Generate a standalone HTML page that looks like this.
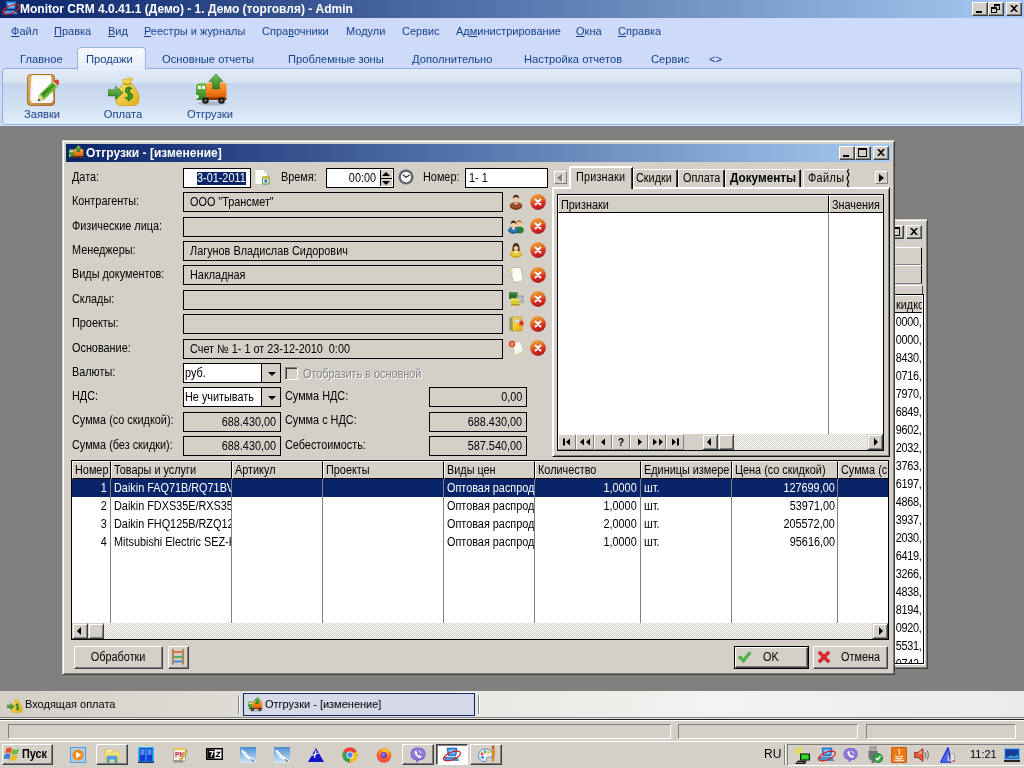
<!DOCTYPE html>
<html lang="ru">
<head>
<meta charset="utf-8">
<title>Monitor CRM</title>
<style>
*{box-sizing:border-box;margin:0;padding:0}
html,body{width:1024px;height:768px;overflow:hidden;background:#808080}
body{font-family:"Liberation Sans",sans-serif;font-size:11px;color:#000;position:relative}
.abs{position:absolute}
.t{position:absolute;white-space:nowrap;line-height:14px;height:14px}
/* main title */
#mtitle{left:0;top:0;width:1024px;height:18px;background:linear-gradient(90deg,#0a246a,#a6caf0)}
#mtitle .cap{left:20px;top:1px;color:#fff;font-weight:bold;font-size:12px;line-height:16px;height:16px}
.wb{position:absolute;width:16px;height:14px;background:#d4d0c8;border:1px solid;border-color:#fff #404040 #404040 #fff;box-shadow:inset -1px -1px 0 #808080}
/* menu */
#menubar{left:0;top:18px;width:1024px;height:28px;background:#cddafa}
#menubar .t{top:6px;font-size:11px;color:#15428b;line-height:14px}
#menubar u{text-decoration:underline}
/* ribbon */
#tabrow{left:0;top:46px;width:1024px;height:22px;background:#cddafa;z-index:2}
#tabrow .t{z-index:3;top:6px;font-size:11.2px;color:#15428b}
#acttab{left:77px;top:1px;width:69px;height:23px;z-index:2;border:1px solid #9ab3dc;border-bottom:none;border-radius:4px 4px 0 0;background:linear-gradient(#f6f9fe,#e6eefa)}
#ribbon{left:0;top:68px;width:1024px;height:58px;background:#cddafa}
#rpanel{left:2px;top:0;width:1020px;height:57px;border:1px solid #94afd8;border-radius:4px;background:linear-gradient(#e2eaf5 0,#d8e3f1 14px,#c5d5ec 14px,#cddbf0 30px,#e2eefb 55px);box-shadow:0 1px 0 #cfeafc}
#ribbon .t{font-size:11.2px;color:#15428b;text-align:center;width:80px}
/* bottom */
#mditabs{left:0;top:691px;width:1024px;height:26px;background:linear-gradient(90deg,#d4d0c8 0%,#e4e2dc 35%,#f3f3f1 70%,#ebebe9 100%)}
#mditabs .t{font-size:11px;top:6px}
#mdiact{left:243px;top:2px;width:232px;height:23px;border:1px solid #0a246a;background:#d6d9e8;box-shadow:0 -1px 0 #fff}
#status{left:0;top:717px;width:1024px;height:24px;background:linear-gradient(#808080 0 1px,#e8e6e0 1px 2px,#202020 2px 3px,#fff 3px 4px,#d4d0c8 4px)}
.sunk{position:absolute;border:1px solid;border-color:#808080 #fff #fff #808080}
#taskbar{left:0;top:741px;width:1024px;height:27px;background:#d4d0c8;border-top:1px solid #fff}

/* dialog */
.frame{position:absolute;background:#d4d0c8;border:1px solid;border-color:#d4d0c8 #404040 #404040 #d4d0c8;box-shadow:inset 1px 1px 0 #fff,inset -1px -1px 0 #808080}
.cap2{position:absolute;height:18px;background:linear-gradient(90deg,#0a246a,#a6caf0)}
.cap2 .t{color:#fff;font-weight:bold;font-size:12px;line-height:16px;height:16px;top:1px}
.lbl{position:absolute;white-space:nowrap;font-size:11px;line-height:14px;height:14px}
.ro{position:absolute;height:20px;border:1px solid #000;background:#d4d0c8;font-size:11px;line-height:16px;padding:1px 0 0 6px;white-space:nowrap;overflow:hidden}
.ro.r{text-align:right;padding:1px 4px 0 0}
.ed{position:absolute;height:20px;border:1px solid #000;background:#fff;font-size:11px;line-height:16px;padding:1px 3px;white-space:nowrap;overflow:hidden}
.btn{position:absolute;background:#d4d0c8;border:1px solid;border-color:#fff #404040 #404040 #fff;box-shadow:inset -1px -1px 0 #808080;font-size:11px;text-align:center;white-space:nowrap}
.sb{position:absolute;background:#d4d0c8;border:1px solid;border-color:#d4d0c8 #404040 #404040 #d4d0c8;box-shadow:inset 1px 1px 0 #fff,inset -1px -1px 0 #808080}
.track{position:absolute;background-image:conic-gradient(#fff 25%,#d4d0c8 0 50%,#fff 0 75%,#d4d0c8 0);background-size:2px 2px}
.ic{position:absolute;width:16px;height:16px}

.combo{position:absolute;height:20px;border:1px solid #000;background:#fff;font-size:11px;line-height:16px;padding:1px 0 0 1px;white-space:nowrap;overflow:hidden}
.combo b{position:absolute;right:0;top:0;width:19px;height:18px;background:#d4d0c8;border-left:1px solid #000}
.combo b:after{content:"";position:absolute;left:6px;top:8px;border:4px solid transparent;border-top:4px solid #000;border-bottom:none}
.tab{position:absolute;background:#d4d0c8;border:1px solid;border-color:#fff #000 transparent #fff;border-radius:2px 2px 0 0;box-shadow:inset -1px 0 0 #404040;font-size:11px;line-height:14px;white-space:nowrap;overflow:hidden}
.gh{position:absolute;background:#d4d0c8;border:1px solid;border-color:#fff #000 #000 #fff;font-size:11px;line-height:14px;padding:2px 0 0 2px;white-space:nowrap;overflow:hidden;height:18px}

.nb{position:absolute;top:434px;width:18px;height:16px;background:#d4d0c8;border:1px solid;border-color:#fff #808080 #808080 #fff}
.nb svg{position:absolute;left:0;top:0}
.cell{position:absolute;font-size:11px;line-height:14px;height:18px;padding-top:2px;white-space:nowrap;overflow:hidden}
.vl{position:absolute;width:1px;background:#808080}

.sx,.sxr,.sxc{display:inline-block;font-size:12px;transform:scaleX(.905);white-space:nowrap}
.sx{transform-origin:0 50%}.sxr{transform-origin:100% 50%}.sxc{transform-origin:50% 50%}
</style>
</head>
<body>
<div id="root" style="position:absolute;left:0;top:0;width:1024px;height:768px;will-change:transform">
<svg width="0" height="0" style="position:absolute">
<defs>
<linearGradient id="gRed" x1=".35" y1="0" x2=".65" y2="1"><stop offset="0" stop-color="#eda436"/><stop offset=".35" stop-color="#e2702a"/><stop offset=".65" stop-color="#d22c26"/><stop offset="1" stop-color="#a8161c"/></linearGradient>
<linearGradient id="gGreenA" x1="0" y1="0" x2="0" y2="1"><stop offset="0" stop-color="#7cc45a"/><stop offset="1" stop-color="#2e7d20"/></linearGradient>
<linearGradient id="gOrange" x1="0" y1="0" x2="0" y2="1"><stop offset="0" stop-color="#fba446"/><stop offset=".6" stop-color="#f57b14"/><stop offset="1" stop-color="#d85a08"/></linearGradient>
<linearGradient id="gYel" x1="0" y1="0" x2="1" y2="1"><stop offset="0" stop-color="#fde66a"/><stop offset="1" stop-color="#e2ae16"/></linearGradient>
<linearGradient id="gClip" x1="0" y1="0" x2="1" y2="1"><stop offset="0" stop-color="#e3b569"/><stop offset="1" stop-color="#b97f33"/></linearGradient>
<symbol id="iX" viewBox="0 0 16 16"><circle cx="8" cy="8" r="7.900" fill="url(#gRed)"/><path d="M5.500 5.500l5 5M10.500 5.500l-5 5" stroke="#fff" stroke-width="1.800" stroke-linecap="round"/></symbol>
<symbol id="iMan" viewBox="0 0 16 16"><ellipse cx="8" cy="12" rx="6.200" ry="3.900" fill="#7e3c18"/><ellipse cx="8" cy="11.300" rx="5" ry="2.600" fill="#96522a"/><path d="M5.800 8.800l2.200 3 2.200-3z" fill="#fff"/><path d="M7.500 9.500h1l.4 2.800-.9 1-.9-1z" fill="#d02020"/><ellipse cx="8" cy="5.300" rx="2.900" ry="3.300" fill="#f3c9a0"/><path d="M4.900 5c-.3-3 1.300-4.300 3.100-4.300S11.400 2 11.100 5c-.6-1.300-1.600-2-3.100-2s-2.500.7-3.100 2z" fill="#4a2a18"/></symbol>
<symbol id="iMen" viewBox="0 0 16 16"><ellipse cx="11.300" cy="12" rx="4.500" ry="3.600" fill="#2f7f32"/><ellipse cx="11.300" cy="5.800" rx="2.400" ry="2.800" fill="#f3c9a0"/><path d="M8.800 5.500c-.2-2.500 1-3.600 2.500-3.600s2.700 1.100 2.500 3.600c-.5-1-1.300-1.600-2.500-1.600s-2 .6-2.500 1.600z" fill="#a8823a"/><ellipse cx="5.500" cy="12.300" rx="5.300" ry="3.600" fill="#1f5f98"/><ellipse cx="5.500" cy="11.700" rx="4.200" ry="2.400" fill="#2f77b4"/><path d="M3.600 9.600l1.900 2.600 1.900-2.600z" fill="#fff"/><ellipse cx="5.500" cy="6.800" rx="2.600" ry="3" fill="#f3c9a0"/><path d="M2.800 6.500c-.3-2.800 1.100-3.900 2.700-3.900s3 1.100 2.700 3.900c-.5-1.100-1.400-1.800-2.700-1.800s-2.200.7-2.700 1.800z" fill="#3a2418"/></symbol>
<symbol id="iWoman" viewBox="0 0 16 16"><path d="M4.600 9.500C3.800 4 5.500 1 8 1s4.200 3 3.400 8.500z" fill="#4a2a1c"/><ellipse cx="8" cy="12.200" rx="6" ry="3.700" fill="#c8a820"/><ellipse cx="8" cy="11.600" rx="4.800" ry="2.500" fill="#e8cc40"/><path d="M6.200 9.200l1.800 2.500 1.800-2.500z" fill="#fff"/><ellipse cx="8" cy="5.800" rx="2.300" ry="2.900" fill="#f3c9a0"/><path d="M5.600 5.200c.1-2 1.100-2.900 2.400-2.900s2.300.9 2.400 2.900c-1-.3-1.800-.8-2.400-1.600-.6.800-1.400 1.300-2.400 1.600z" fill="#4a2a1c"/></symbol>
<symbol id="iPaper" viewBox="0 0 16 16"><path d="M4 1c3-.8 6.500-.6 9 .2.600 3.800 2.300 8 2 12.300-2.500 1.500-7 2-10 1.300C4.700 11 3.500 7 1.500 4 2 2.500 3 1.500 4 1z" fill="#fdfdf8" stroke="#a8a898" stroke-width=".8"/><path d="M1.500 4c.8 1.300 1.800 2 3 2.300L4 1C3 1.500 2 2.500 1.500 4z" fill="#ece9a8" stroke="#c8c490" stroke-width=".4"/><path d="M11.500 13.500c1 .2 2.300.5 3.500 0-1 1.200-2.500 1.800-4 1.800z" fill="#d8dca0"/></symbol>
<symbol id="iStore" viewBox="0 0 16 16"><rect x="1" y="1.500" width="8.500" height="6.500" fill="#2f6a30"/><rect x="1" y="1.500" width="8.500" height="2" fill="#3f8a42"/><rect x="8.500" y="4.500" width="7" height="7" fill="#8a949c"/><rect x="9.500" y="5.500" width="5" height="5" fill="#b8c0c8"/><rect x="3" y="7.500" width="8.500" height="7" fill="#d8cc34"/><rect x="3" y="7.500" width="8.500" height="2" fill="#ece46a"/><rect x="3" y="13" width="8.500" height="1.500" fill="#a89c20"/></symbol>
<symbol id="iBook" viewBox="0 0 16 16"><path d="M1.500 2.500l1.500-1v13l-1.500-1z" fill="#8a8f98"/><rect x="3" y="1" width="11" height="14" rx="1" fill="url(#gYel)" stroke="#a88a10" stroke-width=".6"/><rect x="3" y="1" width="1.800" height="14" fill="#9aa23a"/><rect x="6.500" y="3.500" width="5" height="3" fill="#d8dce6" stroke="#a8a8b0" stroke-width=".5"/><path d="M11.500 10V6.500l2-2.500 2 2.500V10l-2-1.500z" fill="#e02818"/></symbol>
<symbol id="iSeal" viewBox="0 0 16 16"><path d="M4.500 2.500l8-1 3 9.500-8.500 4.500z" fill="#fafaf2" stroke="#c4c4b0" stroke-width=".7"/><path d="M7 15.500l8.500-4.500-.4 1.200-7.600 4z" fill="#d4dc8c"/><circle cx="4" cy="4" r="3.200" fill="#e04434"/><circle cx="4" cy="4" r="1.500" fill="#f7b8a0"/></symbol>
<symbol id="iDoc" viewBox="0 0 16 16"><path d="M1 .5h8.500L13 4v11.500H1z" fill="#fdfdfd" stroke="#c8c8c8" stroke-width=".8"/><path d="M9.500.5V4H13z" fill="#dcdcdc"/><rect x="8" y="7.500" width="7.500" height="8" rx="1" fill="#4e9a3a"/><rect x="9" y="9.500" width="5.500" height="5" fill="#f4f8e8"/><rect x="10.500" y="10.500" width="2.500" height="3" fill="#2a62b8"/><rect x="8" y="7.500" width="7.500" height="2" rx="1" fill="#d8b830"/></symbol>
<symbol id="iClock" viewBox="0 0 16 16"><circle cx="8" cy="8" r="7.700" fill="#8a8e94"/><circle cx="8" cy="8" r="7" fill="#585c62"/><circle cx="8" cy="8" r="5.200" fill="#fdfdfd"/><path d="M8 8.300L5.300 6M8 8.300l3.400-2" stroke="#222" stroke-width="1.100" fill="none" stroke-linecap="round"/></symbol>
<symbol id="iTruck" viewBox="0 0 32 32"><ellipse cx="17" cy="29.500" rx="14" ry="2" fill="#000" opacity=".18"/><path d="M1 12.500c0-2 1.500-3.500 4-3.500h6v17H3c-1.200 0-2-.8-2-2z" fill="url(#gGreenA)"/><rect x="3" y="12" width="3" height="3" rx=".6" fill="#fff"/><rect x="7" y="12" width="3" height="3" rx=".6" fill="#fff"/><rect x="1" y="21" width="2.500" height="3.500" rx="1" fill="#fff"/><rect x="11" y="8.500" width="20.500" height="15.500" rx="2.500" fill="url(#gOrange)"/><rect x="11" y="23.500" width="20.500" height="2.500" fill="#7a3a08"/><circle cx="10.500" cy="26.500" r="3.300" fill="#1a1a1a"/><circle cx="10.500" cy="26.500" r="1.300" fill="#777"/><circle cx="26.500" cy="26.500" r="3.300" fill="#1a1a1a"/><circle cx="26.500" cy="26.500" r="1.300" fill="#777"/><path d="M21 0l7 7.500h-3.700V15h-6.600V7.500H14z" fill="url(#gGreenA)" stroke="#2a6a1c" stroke-width=".6"/></symbol>
<symbol id="iBag" viewBox="0 0 32 32"><g transform="translate(0,1.500) scale(1,1.050)"><path d="M14 4.500c2-1.500 4-.5 5.500-1.500s3.500-.5 5 .5c-1 1.500-1.500 2.800-1.800 4.300 4 2.500 8.300 8.200 8.300 14.200 0 4-2 6.500-4 6.500H12c-2.500 0-4-2-4-5.500 0-6 3.500-12 7.800-15.200-.3-1.300-.9-2.300-1.800-3.300z" fill="url(#gYel)" stroke="#c89a10" stroke-width=".7"/><path d="M15.500 7.800c2.300.9 5 .9 7.300 0" stroke="#b8860c" stroke-width="1.200" fill="none"/><path d="M23.500 13c-1-1.300-5.500-1.800-5.500 1.300 0 3 6 2 6 5.200 0 3.200-5 3-6.500 1.200M20.800 10.500v14" stroke="#2f8a28" stroke-width="2.300" fill="none"/><path d="M0 13.500h7.500V10l7.500 6.500-7.500 6.500v-3.500H0z" fill="url(#gGreenA)" stroke="#2a6a1c" stroke-width=".5"/></g></symbol>
<symbol id="iClip" viewBox="0 0 32 32"><rect x=".5" y=".5" width="27" height="31" rx="3" fill="url(#gClip)" stroke="#a8732c"/><path d="M4.500 1.500h19.500l2.500 24-2 3.500H4.500l-1.500-4z" fill="#f4f4f6"/><path d="M5 1.500h18.500l1.500 22.500-19 2z" fill="#fcfcfd"/><path d="M10.500 27.500l2-7L26.200 7l5 5L17.500 25.500z" fill="#6abf3a"/><path d="M14.500 19L27.800 8.800l1.400 1.400L16 23.500z" fill="#3f8f22"/><path d="M26.500 7.500l1.500-1.500c1-1 3-.5 4 .8s.8 2.800-.2 3.500L30.500 11.500z" fill="#d8482a"/><path d="M25.500 8.500l1-1 4 4-1 1z" fill="#d8d8d0"/><path d="M11 27l1.800-6.200 4.200 4.200z" fill="#f2d49a"/><path d="M11 27l.7-2.400 1.700 1.700z" fill="#222"/></symbol>
<symbol id="iOk" viewBox="0 0 16 16"><path d="M1 8.500l2.500-2 3 3.500L13.500 2l2 1.800L6.800 14.500z" fill="#4fb73c" stroke="#2d8a22" stroke-width=".6"/></symbol>
<symbol id="iCancel" viewBox="0 0 16 16"><path d="M1 3.500L3.500 1 8 5.500 12.500 1 15 3.500 10.500 8l4.500 4.500-2.500 2.500L8 10.500 3.500 15 1 12.500 5.500 8z" fill="#e0242a" stroke="#b01018" stroke-width=".5"/></symbol>

<symbol id="tFlag" viewBox="0 0 16 14"><path d="M2.300 1.500c2-1.500 4-1.400 5.800 0L6.800 6.500C5 5.200 3.200 5.200 1 6.500z" fill="#e8502a"/><path d="M8.800 2c1.900 1.100 4 1 6.200-.5L13.700 6.500c-2.200 1.500-4.300 1.500-6.200.5z" fill="#6cb83a"/><path d="M.8 7.500c2.200-1.300 4-1.300 5.800 0L5.300 12.500c-1.800-1.300-3.600-1.300-5.800 0z" fill="#3a7fd8"/><path d="M7.300 8c1.900 1.100 4 1 6.200-.5l-1.300 5c-2.200 1.500-4.300 1.500-6.200.5z" fill="#f2b818"/></symbol>
<symbol id="tWmp" viewBox="0 0 16 16"><rect x=".5" y=".5" width="15" height="15" fill="#a8d0f0" stroke="#5a98d8"/><circle cx="8" cy="8" r="5.600" fill="#f08a18"/><path d="M6.200 4.800v6.400L11.300 8z" fill="#fff"/></symbol>
<symbol id="tFolder" viewBox="0 0 16 14"><path d="M.5 2c0-.8.500-1.500 1.500-1.500h4l1.500 1.500H15c.6 0 1 .4 1 1v10H.5z" fill="#f2dc7e" stroke="#d8b848" stroke-width=".6"/><rect x="3" y=".8" width="5" height="1.500" fill="#fdf6c8"/><path d="M2.500 14V8.500c0-1 .8-1.800 1.800-1.800h7.400c1 0 1.800.8 1.800 1.800V14h-3v-3.500h-5V14z" fill="#4aa0dc"/></symbol>
<symbol id="tBook" viewBox="0 0 16 16"><rect x="0" y="0" width="16" height="15" fill="#28c8e8"/><rect x="0" y="14.500" width="16" height="1.500" fill="#0c2a78"/><rect x="1.500" y="1" width="6" height="13" fill="#1838d8"/><rect x="8.500" y="1" width="6" height="13" fill="#1838d8"/><path d="M2.500 3h4M2.500 5h4M2.500 7h4M9.500 3h4M9.500 5h4M9.500 7h4" stroke="#9ad8f8" stroke-width="1"/></symbol>
<symbol id="tPn" viewBox="0 0 16 16"><path d="M1.500 1.500h12v11l-2 2.500h-10z" fill="#f4f0e4" stroke="#888" stroke-width=".7"/><rect x="1.500" y="1" width="12" height="2" fill="#e8c848"/><path d="M1.500 13h10l-.5 2.500H1.500z" fill="#9a9a9a"/><text x="3" y="9.500" font-family="Liberation Sans" font-size="6.500" font-weight="bold" fill="#c01838">PN</text><path d="M8 12l6.500-9 1.500 1-6.500 9-2 .8z" fill="#f0c030" stroke="#8a6a10" stroke-width=".4"/></symbol>
<symbol id="t7z" viewBox="0 0 17 12"><rect x="0" y="0" width="17" height="12" fill="#000"/><rect x="1.500" y="1.500" width="14" height="9" fill="#fff"/><rect x="1.500" y="1.500" width="7" height="9" fill="#000"/><path d="M3.200 3.600h3.800L5 8.800" stroke="#fff" stroke-width="1.300" fill="none"/><path d="M10.300 4.200h3.600l-3.600 4.300h3.900" stroke="#000" stroke-width="1.100" fill="none"/></symbol>
<symbol id="tBird" viewBox="0 0 16 16"><linearGradient id="gSky" x1="0" y1="0" x2="0" y2="1"><stop offset="0" stop-color="#4a8fd0"/><stop offset="1" stop-color="#d4e8f8"/></linearGradient><rect width="16" height="16" fill="url(#gSky)"/><path d="M1 2.500c2 .5 3.500 1.500 5 3.500l2 2.500 5.500 4 2 3-3.500-2-5-2.500L3.500 8 2 5z" fill="#fff"/><path d="M10 12l4.500 3.500L13 13z" fill="#222"/><path d="M3 6l3 2.500" stroke="#8aa" stroke-width=".6"/></symbol>
<symbol id="tTri" viewBox="0 0 16 14"><path d="M8 0l8 14H0z" fill="#1414c8"/><path d="M3.500 7.500l7-2.500M7.800 2.500L6.500 10" stroke="#fff" stroke-width="1.200"/></symbol>
<symbol id="tChrome" viewBox="0 0 16 16"><circle cx="8" cy="8" r="7.500" fill="#e84436"/><path d="M8 8L1.500 4.250A7.500 7.500 0 0 0 8 15.500z" fill="#34a454"/><path d="M8 8v7.500A7.500 7.500 0 0 0 14.500 4.250z" fill="#fbc116"/><path d="M8 8L1.500 4.250A7.500 7.500 0 0 1 14.500 4.250z" fill="#e84436"/><path d="M8 8l-3.200 5.600L1.500 4.250z" fill="#34a454"/><circle cx="8" cy="8" r="3.500" fill="#fff"/><circle cx="8" cy="8" r="2.700" fill="#4a8af4"/></symbol>
<symbol id="tFox" viewBox="0 0 16 16"><radialGradient id="gFox" cx="55%" cy="25%" r="80%"><stop offset="0" stop-color="#ffd83a"/><stop offset=".5" stop-color="#ff7a1e"/><stop offset="1" stop-color="#e8284a"/></radialGradient><circle cx="8" cy="8.500" r="7.300" fill="url(#gFox)"/><path d="M10 .5c2 1.500 4 3 4.800 5.500-1-1-2-1.500-3-1.500z" fill="#ffc02a"/><circle cx="7.800" cy="8.300" r="3.300" fill="#7a3ab8"/><circle cx="7.300" cy="7.800" r="1.800" fill="#a468e0"/></symbol>
<symbol id="tViber" viewBox="0 0 16 16"><path d="M8 .5c5 0 7.500 2 7.500 6.500s-2.500 6.300-6.500 6.500L6 16v-2.800C2.500 12.500.5 10.800.5 7S3 .5 8 .5z" fill="#7d6bcc"/><path d="M8 1.800c4 0 6.200 1.600 6.200 5.200S12 12.200 8 12.200 1.800 10.600 1.800 7 4 1.800 8 1.800z" fill="#8e7cd8"/><path d="M5.200 4c.5-.5 1-.3 1.300.2l.7 1.200c.2.400 0 .8-.4 1.100.3 1 1.200 1.900 2.200 2.300.3-.4.700-.6 1.100-.3l1.100.8c.4.300.5.800 0 1.300-.6.600-1.400.6-2.500.1C6.800 9.800 5.300 8 4.800 6c-.2-.9-.1-1.500.4-2z" fill="#fff"/><path d="M8.500 3.800c1.500.2 2.600 1.300 2.700 2.800" stroke="#fff" stroke-width=".8" fill="none"/></symbol>
<symbol id="tCrm" viewBox="0 0 20 16"><path d="M5 1h10l-1 7.500H6z" fill="#2a8ae0" stroke="#1858a8" stroke-width=".6"/><path d="M6.500 2.500h7l-.6 4.500H7.200z" fill="#7cc4f8"/><path d="M4 10h10l3 3.500H2z" fill="#4a9ae0" stroke="#1858a8" stroke-width=".5"/><ellipse cx="10" cy="9" rx="9" ry="3.800" fill="none" stroke="#d81818" stroke-width="1.100" transform="rotate(-22 10 9)"/><path d="M3 12l-1.500-2.500 3 .5z" fill="#d81818"/></symbol>
<symbol id="tPaint" viewBox="0 0 18 18"><path d="M7.500 4C3.500 4 .5 6.800.5 10.500s3 6 6.500 6c1.500 0 1.800-1 1.500-2-.4-1.300.5-2.200 2-2.200h1.500c1.500 0 2.500-1 2.500-2.800C14.500 6.500 11.500 4 7.500 4z" fill="#e8f0f8" stroke="#4a8ac8" stroke-width="1"/><circle cx="4" cy="9" r="1.400" fill="#e84830"/><circle cx="7" cy="6.800" r="1.400" fill="#48b048"/><circle cx="10.500" cy="7.500" r="1.400" fill="#f0b820"/><circle cx="4.500" cy="12.500" r="1.400" fill="#3a78d8"/><path d="M14 1.500l1.500-1 1.300 6-1 9.500-1.800.2z" fill="#e8902a" stroke="#a85a10" stroke-width=".4"/><path d="M14 1.500l1.500-1 .5 2.500-1.800.5z" fill="#c83a2a"/></symbol>
<symbol id="tNet" viewBox="0 0 17 17"><path d="M1 6c1-3 3.500-5 7-5M3 7c.8-2 2.500-3.500 5-3.500M5 8c.5-1.200 1.500-2 3-2" stroke="#f0e020" stroke-width="1.300" fill="none"/><path d="M6 6.500h10v7H6z" fill="#111"/><rect x="7.200" y="7.500" width="7.600" height="5" fill="#2ad82a"/><path d="M4 13.500h9L11 17H1z" fill="#222"/><path d="M3.500 15.500h6" stroke="#888" stroke-width=".8"/></symbol>
<symbol id="tUsb" viewBox="0 0 17 17"><rect x="4" y="0" width="6" height="5" fill="#c8c8c8" stroke="#666" stroke-width=".7"/><path d="M2.500 5h9v6.500c0 1.500-1.500 2.500-3 2.500V17H5.500v-3c-1.500 0-3-1-3-2.500z" fill="#707478"/><rect x="5.500" y="1.500" width="1" height="1.500" fill="#555"/><rect x="7.500" y="1.500" width="1" height="1.500" fill="#555"/><circle cx="12" cy="12" r="4.600" fill="#28a838" stroke="#116a20" stroke-width=".6"/><path d="M9.800 12l1.700 1.900 3-3.800" stroke="#fff" stroke-width="1.500" fill="none"/></symbol>
<symbol id="tJava" viewBox="0 0 16 16"><rect width="16" height="16" rx="1.500" fill="#f07818"/><rect x=".5" y=".5" width="15" height="15" rx="1.200" fill="none" stroke="#c85a08"/><path d="M8.500 2c-2 2 1.500 3-.5 5.500M4 9c2 1 6 1 8 0M4.500 11c2 1 5 1 7 0M3.500 13c3 1.200 6.500 1.200 9.500 0" stroke="#fff" stroke-width="1.100" fill="none"/></symbol>
<symbol id="tSpk" viewBox="0 0 16 16"><path d="M.5 5.500h3.500L9 1.500v13L4 10.500H.5z" fill="#e85a3a" stroke="#8a2a18" stroke-width=".8"/><path d="M2 6.500h2L8 3.500v3z" fill="#f8b8a0"/><path d="M11 5c1 1.800 1 4.200 0 6M13 3.500c1.800 2.700 1.800 6.300 0 9" stroke="#666" stroke-width="1" fill="none"/></symbol>
<symbol id="tTri2" viewBox="0 0 16 16"><path d="M8 1l-7 14h10z" fill="none" stroke="#2030d8" stroke-width="1.600"/><path d="M8 2.500L2.500 14h5z" fill="#4860f0"/><rect x="10.500" y="7" width="4" height="8" fill="#e8e8e8" stroke="#888" stroke-width=".6"/><rect x="12.800" y="13" width="1.500" height="1.500" fill="#e82020"/></symbol>
<symbol id="tMon" viewBox="0 0 16 16"><rect x=".5" y="1.500" width="15" height="11" fill="#2a5ab8" stroke="#7ab8e8" stroke-width="1"/><rect x="2" y="3" width="12" height="8" fill="#1a3a98"/><path d="M2 11l5-3 3 1.500 4-2V11z" fill="#3a9ad8"/><rect x="0" y="13" width="16" height="2" fill="#222"/></symbol>
</defs></svg>

<!-- MAIN TITLE -->
<div id="mtitle" class="abs">
  <svg class="abs" style="left:1px;top:0" width="20" height="17"><use href="#tCrm"/></svg>
  <div class="t cap">Monitor CRM 4.0.41.1 (Демо) - 1. Демо (торговля) - Admin</div>
  <div class="wb" style="left:972px;top:2px"><i class="abs" style="left:3px;top:8px;width:6px;height:2px;background:#000"></i></div>
  <div class="wb" style="left:988px;top:2px"><i class="abs" style="left:5px;top:1px;width:6px;height:6px;border:1px solid #000;border-top-width:2px"></i><i class="abs" style="left:2px;top:4px;width:6px;height:6px;border:1px solid #000;border-top-width:2px;background:#d4d0c8"></i></div>
  <div class="wb" style="left:1006px;top:2px"><svg class="abs" style="left:3px;top:2px" width="8" height="7" viewBox="0 0 8 7"><path d="M0 0h2l2 2.3L6 0h2L5 3.5 8 7H6L4 4.7 2 7H0l3-3.5z" fill="#000"/></svg></div>
</div>
<!-- MENU -->
<div id="menubar" class="abs">
  <div class="t" style="left:11px"><u>Ф</u>айл</div>
  <div class="t" style="left:54px"><u>П</u>равка</div>
  <div class="t" style="left:108px"><u>В</u>ид</div>
  <div class="t" style="left:144px"><u>Р</u>еестры и журналы</div>
  <div class="t" style="left:262px">Спра<u>в</u>очники</div>
  <div class="t" style="left:346px">Мо<u>д</u>ули</div>
  <div class="t" style="left:402px">Сервис</div>
  <div class="t" style="left:456px">Ад<u>м</u>инистрирование</div>
  <div class="t" style="left:576px"><u>О</u>кна</div>
  <div class="t" style="left:618px"><u>С</u>правка</div>
</div>
<!-- RIBBON TABS -->
<div id="tabrow" class="abs">
  <div id="acttab" class="abs"></div>
  <div class="t" style="left:20px">Главное</div>
  <div class="t" style="left:86px">Продажи</div>
  <div class="t" style="left:162px">Основные отчеты</div>
  <div class="t" style="left:288px">Проблемные зоны</div>
  <div class="t" style="left:412px">Дополнительно</div>
  <div class="t" style="left:524px">Настройка отчетов</div>
  <div class="t" style="left:651px">Сервис</div>
  <div class="t" style="left:709px">&lt;&gt;</div>
</div>
<div id="ribbon" class="abs">
  <div id="rpanel" class="abs"></div>
  <svg class="abs" style="left:27px;top:6px" width="32" height="32"><use href="#iClip"/></svg><svg class="abs" style="left:108px;top:6px" width="32" height="32"><use href="#iBag"/></svg><svg class="abs" style="left:195px;top:6px" width="32" height="32"><use href="#iTruck"/></svg>
  <div class="t" style="left:2px;top:39px">Заявки</div>
  <div class="t" style="left:83px;top:39px">Оплата</div>
  <div class="t" style="left:170px;top:39px">Отгрузки</div>
</div>

<!-- BG WINDOW -->
<div class="frame" style="left:700px;top:219px;width:228px;height:450px"></div>
<div class="abs" style="left:704px;top:223px;width:220px;height:18px;background:linear-gradient(90deg,#808080,#d2cfc8 90%)"></div>
<div class="wb" style="left:888px;top:225px"><i class="abs" style="left:2px;top:1px;width:9px;height:9px;border:1px solid #000;border-top-width:2px"></i></div>
<div class="wb" style="left:906px;top:225px"><svg class="abs" style="left:3px;top:2px" width="8" height="7" viewBox="0 0 8 7"><path d="M0 0h2l2 2.3L6 0h2L5 3.5 8 7H6L4 4.7 2 7H0l3-3.5z" fill="#000"/></svg></div>
<div class="abs" style="left:704px;top:241px;width:220px;height:424px;background:#d4d0c8"></div>
<div class="abs" style="left:800px;top:247px;width:122px;height:18px;background:#d4d0c8;border:1px solid;border-color:#fff #000 #808080 #fff"></div>
<div class="abs" style="left:800px;top:265px;width:122px;height:19px;background:#d4d0c8;border:1px solid;border-color:#fff #000 #808080 #fff"></div>
<div class="abs" style="left:800px;top:285px;width:123px;height:9px;background:#d4d0c8;border-top:1px solid #fff;border-right:1px solid #404040"></div>
<div class="abs" style="left:800px;top:294px;width:124px;height:370px;background:#fff;border:1px solid #000;box-shadow:1px 1px 0 #fff"></div>
<div class="gh" style="left:801px;top:295px;width:121px;height:18px;padding:2px 0 0 94px;border-right:none"><span class="sx">кидкой)</span></div>
<div class="cell" style="left:880px;top:313px;width:43px;text-align:right;padding-right:1px;letter-spacing:-.3px"><span class="sxr">0000,</span></div>
<div class="cell" style="left:880px;top:331px;width:43px;text-align:right;padding-right:1px;letter-spacing:-.3px"><span class="sxr">0000,</span></div>
<div class="cell" style="left:880px;top:349px;width:43px;text-align:right;padding-right:1px;letter-spacing:-.3px"><span class="sxr">8430,</span></div>
<div class="cell" style="left:880px;top:367px;width:43px;text-align:right;padding-right:1px;letter-spacing:-.3px"><span class="sxr">0716,</span></div>
<div class="cell" style="left:880px;top:385px;width:43px;text-align:right;padding-right:1px;letter-spacing:-.3px"><span class="sxr">7970,</span></div>
<div class="cell" style="left:880px;top:403px;width:43px;text-align:right;padding-right:1px;letter-spacing:-.3px"><span class="sxr">6849,</span></div>
<div class="cell" style="left:880px;top:421px;width:43px;text-align:right;padding-right:1px;letter-spacing:-.3px"><span class="sxr">9602,</span></div>
<div class="cell" style="left:880px;top:439px;width:43px;text-align:right;padding-right:1px;letter-spacing:-.3px"><span class="sxr">2032,</span></div>
<div class="cell" style="left:880px;top:457px;width:43px;text-align:right;padding-right:1px;letter-spacing:-.3px"><span class="sxr">3763,</span></div>
<div class="cell" style="left:880px;top:475px;width:43px;text-align:right;padding-right:1px;letter-spacing:-.3px"><span class="sxr">6197,</span></div>
<div class="cell" style="left:880px;top:493px;width:43px;text-align:right;padding-right:1px;letter-spacing:-.3px"><span class="sxr">4868,</span></div>
<div class="cell" style="left:880px;top:511px;width:43px;text-align:right;padding-right:1px;letter-spacing:-.3px"><span class="sxr">3937,</span></div>
<div class="cell" style="left:880px;top:529px;width:43px;text-align:right;padding-right:1px;letter-spacing:-.3px"><span class="sxr">2030,</span></div>
<div class="cell" style="left:880px;top:547px;width:43px;text-align:right;padding-right:1px;letter-spacing:-.3px"><span class="sxr">6419,</span></div>
<div class="cell" style="left:880px;top:565px;width:43px;text-align:right;padding-right:1px;letter-spacing:-.3px"><span class="sxr">3266,</span></div>
<div class="cell" style="left:880px;top:583px;width:43px;text-align:right;padding-right:1px;letter-spacing:-.3px"><span class="sxr">4838,</span></div>
<div class="cell" style="left:880px;top:601px;width:43px;text-align:right;padding-right:1px;letter-spacing:-.3px"><span class="sxr">8194,</span></div>
<div class="cell" style="left:880px;top:619px;width:43px;text-align:right;padding-right:1px;letter-spacing:-.3px"><span class="sxr">0920,</span></div>
<div class="cell" style="left:880px;top:637px;width:43px;text-align:right;padding-right:1px;letter-spacing:-.3px"><span class="sxr">5531,</span></div>
<div class="cell" style="left:880px;top:655px;width:43px;height:8px;text-align:right;padding-right:1px;letter-spacing:-.3px"><span class="sxr">0742,</span></div>

<!-- DIALOG -->
<div class="frame" style="left:62px;top:140px;width:833px;height:535px"></div>
<div class="cap2" style="left:66px;top:144px;width:825px"><div class="t" style="left:20px">Отгрузки - [изменение]</div>
<div class="wb" style="left:773px;top:2px"><i class="abs" style="left:3px;top:8px;width:6px;height:2px;background:#000"></i></div>
<div class="wb" style="left:789px;top:2px"><i class="abs" style="left:2px;top:1px;width:9px;height:9px;border:1px solid #000;border-top-width:2px"></i></div>
<div class="wb" style="left:807px;top:2px"><svg class="abs" style="left:3px;top:2px" width="8" height="7" viewBox="0 0 8 7"><path d="M0 0h2l2 2.3L6 0h2L5 3.5 8 7H6L4 4.7 2 7H0l3-3.5z" fill="#000"/></svg></div>
</div>
<svg class="abs" style="left:68px;top:145px" width="16" height="15"><use href="#iTruck"/></svg>
<div class="lbl" style="left:72px;top:170px"><span class="sx">Дата:</span></div>
<div class="lbl" style="left:72px;top:194px"><span class="sx">Контрагенты:</span></div><div class="ro" style="left:183px;top:192px;width:320px"><span class="sx">ООО &quot;Трансмет&quot;</span></div>
<div class="lbl" style="left:72px;top:219px"><span class="sx">Физические лица:</span></div><div class="ro" style="left:183px;top:217px;width:320px"></div>
<div class="lbl" style="left:72px;top:243px"><span class="sx">Менеджеры:</span></div><div class="ro" style="left:183px;top:241px;width:320px"><span class="sx">Лагунов Владислав Сидорович</span></div>
<div class="lbl" style="left:72px;top:267px"><span class="sx">Виды документов:</span></div><div class="ro" style="left:183px;top:265px;width:320px"><span class="sx">Накладная</span></div>
<div class="lbl" style="left:72px;top:292px"><span class="sx">Склады:</span></div><div class="ro" style="left:183px;top:290px;width:320px"></div>
<div class="lbl" style="left:72px;top:316px"><span class="sx">Проекты:</span></div><div class="ro" style="left:183px;top:314px;width:320px"></div>
<div class="lbl" style="left:72px;top:341px"><span class="sx">Основание:</span></div><div class="ro" style="left:183px;top:339px;width:320px"><span class="sx">Счет № 1- 1 от 23-12-2010&nbsp; 0:00</span></div>
<svg class="abs" style="left:508px;top:194px" width="16" height="16"><use href="#iMan"/></svg><svg class="abs" style="left:530px;top:194px" width="16" height="16"><use href="#iX"/></svg>
<svg class="abs" style="left:508px;top:218px" width="16" height="16"><use href="#iMen"/></svg><svg class="abs" style="left:530px;top:218px" width="16" height="16"><use href="#iX"/></svg>
<svg class="abs" style="left:508px;top:242px" width="16" height="16"><use href="#iWoman"/></svg><svg class="abs" style="left:530px;top:242px" width="16" height="16"><use href="#iX"/></svg>
<svg class="abs" style="left:508px;top:267px" width="16" height="16"><use href="#iPaper"/></svg><svg class="abs" style="left:530px;top:267px" width="16" height="16"><use href="#iX"/></svg>
<svg class="abs" style="left:508px;top:291px" width="16" height="16"><use href="#iStore"/></svg><svg class="abs" style="left:530px;top:291px" width="16" height="16"><use href="#iX"/></svg>
<svg class="abs" style="left:508px;top:316px" width="16" height="16"><use href="#iBook"/></svg><svg class="abs" style="left:530px;top:316px" width="16" height="16"><use href="#iX"/></svg>
<svg class="abs" style="left:508px;top:340px" width="16" height="16"><use href="#iSeal"/></svg><svg class="abs" style="left:530px;top:340px" width="16" height="16"><use href="#iX"/></svg>
<svg class="abs" style="left:254px;top:169px" width="16" height="16"><use href="#iDoc"/></svg><svg class="abs" style="left:398px;top:169px" width="16" height="16"><use href="#iClock"/></svg>
<div class="abs" style="z-index:3;left:380px;top:170px;width:1px;height:16px;background:#000"></div><div class="abs" style="z-index:3;left:381px;top:170px;width:11px;height:16px;background:#d4d0c8"></div><div class="abs" style="z-index:3;left:381px;top:178px;width:11px;height:1px;background:#000"></div><i class="abs" style="z-index:3;left:382px;top:172px;border:4px solid transparent;border-bottom:4px solid #000;border-top:none;width:0;height:0"></i><i class="abs" style="z-index:3;left:382px;top:181px;border:4px solid transparent;border-top:4px solid #000;border-bottom:none;width:0;height:0"></i>

<div class="ed" style="left:183px;top:168px;width:68px;height:20px"><span style="background:#0a246a;color:#fff;display:inline-block;margin:1px 0 0 10px;height:13px;line-height:13px;width:49px;overflow:visible"><span class="sx">3-01-2011</span></span></div>
<div class="lbl" style="left:281px;top:170px"><span class="sx">Время:</span></div>
<div class="ed" style="left:326px;top:168px;width:68px;height:20px;text-align:right;padding-right:17px"><span class="sxr">00:00</span></div>
<div class="lbl" style="left:423px;top:170px"><span class="sx">Номер:</span></div>
<div class="ed" style="left:465px;top:168px;width:83px;height:20px"><span class="sx">1- 1</span></div>
<div class="lbl" style="left:72px;top:365px"><span class="sx">Валюты:</span></div>
<div class="lbl" style="left:72px;top:389px"><span class="sx">НДС:</span></div>
<div class="lbl" style="left:72px;top:413px"><span class="sx">Сумма (со скидкой):</span></div>
<div class="lbl" style="left:72px;top:438px"><span class="sx">Сумма (без скидки):</span></div>
<div class="lbl" style="left:285px;top:389px"><span class="sx">Сумма НДС:</span></div>
<div class="lbl" style="left:285px;top:413px"><span class="sx">Сумма с НДС:</span></div>
<div class="lbl" style="left:285px;top:438px"><span class="sx">Себестоимость:</span></div>
<div class="ro r" style="left:183px;top:412px;width:98px"><span class="sxr">688.430,00</span></div>
<div class="ro r" style="left:183px;top:436px;width:98px"><span class="sxr">688.430,00</span></div>
<div class="ro r" style="left:429px;top:387px;width:98px"><span class="sxr">0,00</span></div>
<div class="ro r" style="left:429px;top:412px;width:98px"><span class="sxr">688.430,00</span></div>
<div class="ro r" style="left:429px;top:436px;width:98px"><span class="sxr">587.540,00</span></div>
<div class="combo" style="left:183px;top:363px;width:98px"><span class="sx">руб.</span><b></b></div>
<div class="combo" style="left:183px;top:387px;width:98px"><span class="sx">Не учитывать</span><b></b></div>
<div class="abs" style="left:285px;top:367px;width:13px;height:13px;background:#d4d0c8;border:1px solid;border-color:#808080 #fff #fff #808080;box-shadow:inset 1px 1px 0 #404040"></div>
<div class="lbl" style="left:303px;top:367px;color:#808080;text-shadow:1px 1px 0 #fff"><span class="sx">Отобразить в основной</span></div>

<!-- TAB PANEL -->
<div class="btn" style="left:554px;top:171px;width:13px;height:13px;box-shadow:none;border-color:#fff #808080 #808080 #fff"><i class="abs" style="left:2px;top:2px;border:4px solid transparent;border-right:5px solid #808080;border-left:none;filter:drop-shadow(1px 1px 0 #fff)"></i></div>
<div class="tab" style="left:633px;top:169px;width:45px;height:19px;padding:1px 0 0 2px"><span class="sx">Скидки</span></div>
<div class="tab" style="left:678px;top:169px;width:47px;height:19px;padding:1px 0 0 4px"><span class="sx">Оплата</span></div>
<div class="tab" style="left:725px;top:169px;width:76px;height:19px;padding:1px 0 0 4px;font-weight:bold;font-size:12px"><span class="sx" style="font-size:13px">Документы</span></div>
<div class="tab" style="left:803px;top:169px;width:47px;height:19px;padding:1px 0 0 4px;letter-spacing:.4px;border-right-color:transparent;box-shadow:none"><span class="sx">Файлы</span></div>
<svg class="abs" style="left:845px;top:168px" width="8" height="21" viewBox="0 0 8 21"><path d="M8 0H3.5l-1 3 1.5 3-2 3.5 1.5 3.5-1 3.5 1.5 4.5H8z" fill="#d4d0c8"/><path d="M3.5 1l-1 2.5 1.5 3-2 3.5 1.5 3.5-1 3.5 1.5 3.5" fill="none" stroke="#000" stroke-width="1.2"/></svg>
<div class="btn" style="left:875px;top:171px;width:13px;height:13px;box-shadow:none;border-color:#fff #808080 #808080 #fff"><i class="abs" style="left:3px;top:2px;border:4px solid transparent;border-left:5px solid #000;border-right:none"></i></div>
<div class="abs" style="left:552px;top:187px;width:338px;height:270px;background:#d4d0c8;border:1px solid;border-color:#fff #101010 #101010 #fff;box-shadow:inset 1px 1px 0 #fff,inset -1px -1px 0 #808080"></div>
<div class="tab" style="left:569px;top:166px;width:64px;height:23px;padding:2px 0 0 5px;border-width:2px 1px 0 2px;font-size:11px;letter-spacing:.2px"><span class="sx">Признаки</span></div>
<div class="abs" style="left:557px;top:194px;width:327px;height:257px;background:#fff;border:1px solid #000"></div>
<div class="gh" style="left:558px;top:195px;width:271px"><span class="sx">Признаки</span></div>
<div class="gh" style="left:829px;top:195px;width:54px;border-right:none"><span class="sx">Значения</span></div>
<div class="abs" style="left:828px;top:213px;width:1px;height:221px;background:#808080"></div>
<div class="nb" style="left:558px"><svg width="16" height="14" viewBox="0 0 16 14" fill="#000"><path d="M4 3.5h2v7H4z"/><path d="M11 3.5L11 10.5L7 7z"/></svg></div>
<div class="nb" style="left:576px"><svg width="16" height="14" viewBox="0 0 16 14" fill="#000"><path d="M7 3.5L7 10.5L3 7z"/><path d="M13 3.5L13 10.5L9 7z"/></svg></div>
<div class="nb" style="left:594px"><svg width="16" height="14" viewBox="0 0 16 14" fill="#000"><path d="M10 3.5L10 10.5L6 7z"/></svg></div>
<div class="nb" style="left:612px"><svg width="16" height="14" viewBox="0 0 16 14" fill="#000"><text x="5" y="11" font-family="Liberation Sans" font-size="10" font-weight="bold">?</text></svg></div>
<div class="nb" style="left:630px"><svg width="16" height="14" viewBox="0 0 16 14" fill="#000"><path d="M7 3.5L7 10.5L11 7z"/></svg></div>
<div class="nb" style="left:648px"><svg width="16" height="14" viewBox="0 0 16 14" fill="#000"><path d="M4 3.5L4 10.5L8 7z"/><path d="M10 3.5L10 10.5L14 7z"/></svg></div>
<div class="nb" style="left:666px"><svg width="16" height="14" viewBox="0 0 16 14" fill="#000"><path d="M5 3.5L5 10.5L9 7z"/><path d="M10 3.5h2v7h-2z"/></svg></div>
<div class="abs" style="left:684px;top:434px;width:18px;height:16px;background:#d4d0c8"></div>
<div class="track" style="left:702px;top:434px;width:181px;height:16px"></div>
<div class="sb" style="left:702px;top:434px;width:16px;height:16px"><i class="abs" style="left:4px;top:3px;border:4px solid transparent;border-right:4px solid #000;border-left:none"></i></div>
<div class="sb" style="left:718px;top:434px;width:16px;height:16px"></div>
<div class="sb" style="left:867px;top:434px;width:16px;height:16px"><i class="abs" style="left:6px;top:3px;border:4px solid transparent;border-left:4px solid #000;border-right:none"></i></div>


<!-- MAIN GRID -->
<div class="abs" style="left:71px;top:460px;width:818px;height:180px;background:#fff;border:1px solid #000"></div>
<div class="gh" style="left:72px;top:461px;width:39px;height:18px;padding:1px 0 0 2px"><span class="sx">Номер</span></div>
<div class="gh" style="left:111px;top:461px;width:121px;height:18px;padding:1px 0 0 2px"><span class="sx">Товары и услуги</span></div>
<div class="gh" style="left:232px;top:461px;width:91px;height:18px;padding:1px 0 0 2px"><span class="sx">Артикул</span></div>
<div class="gh" style="left:323px;top:461px;width:121px;height:18px;padding:1px 0 0 2px"><span class="sx">Проекты</span></div>
<div class="gh" style="left:444px;top:461px;width:91px;height:18px;padding:1px 0 0 2px"><span class="sx">Виды цен</span></div>
<div class="gh" style="left:535px;top:461px;width:106px;height:18px;padding:1px 0 0 2px"><span class="sx">Количество</span></div>
<div class="gh" style="left:641px;top:461px;width:91px;height:18px;padding:1px 0 0 2px"><span class="sx">Единицы измере</span></div>
<div class="gh" style="left:732px;top:461px;width:106px;height:18px;padding:1px 0 0 2px"><span class="sx">Цена (со скидкой)</span></div>
<div class="gh" style="left:838px;top:461px;width:50px;height:18px;padding:1px 0 0 2px;border-right:none"><span class="sx">Сумма (с</span></div>
<div class="abs" style="left:72px;top:479px;width:816px;height:18px;background:#0a246a"></div>
<div class="vl" style="left:110px;top:479px;height:144px"></div><div class="vl" style="left:231px;top:479px;height:144px"></div><div class="vl" style="left:322px;top:479px;height:144px"></div><div class="vl" style="left:443px;top:479px;height:144px"></div><div class="vl" style="left:534px;top:479px;height:144px"></div><div class="vl" style="left:640px;top:479px;height:144px"></div><div class="vl" style="left:731px;top:479px;height:144px"></div><div class="vl" style="left:837px;top:479px;height:144px"></div>
<div class="cell" style="left:72px;top:479px;width:35px;text-align:right;color:#fff"><span class="sxr">1</span></div><div class="cell" style="left:114px;top:479px;width:117px;color:#fff"><span class="sx">Daikin FAQ71B/RQ71BV</span></div><div class="cell" style="left:447px;top:479px;width:87px;color:#fff"><span class="sx">Оптовая распрод</span></div><div class="cell" style="left:535px;top:479px;width:102px;text-align:right;color:#fff"><span class="sxr">1,0000</span></div><div class="cell" style="left:644px;top:479px;width:60px;color:#fff"><span class="sx">шт.</span></div><div class="cell" style="left:732px;top:479px;width:103px;text-align:right;color:#fff"><span class="sxr">127699,00</span></div>
<div class="cell" style="left:72px;top:497px;width:35px;text-align:right"><span class="sxr">2</span></div><div class="cell" style="left:114px;top:497px;width:117px"><span class="sx">Daikin FDXS35E/RXS35</span></div><div class="cell" style="left:447px;top:497px;width:87px"><span class="sx">Оптовая распрод</span></div><div class="cell" style="left:535px;top:497px;width:102px;text-align:right"><span class="sxr">1,0000</span></div><div class="cell" style="left:644px;top:497px;width:60px"><span class="sx">шт.</span></div><div class="cell" style="left:732px;top:497px;width:103px;text-align:right"><span class="sxr">53971,00</span></div>
<div class="cell" style="left:72px;top:515px;width:35px;text-align:right"><span class="sxr">3</span></div><div class="cell" style="left:114px;top:515px;width:117px"><span class="sx">Daikin FHQ125B/RZQ12</span></div><div class="cell" style="left:447px;top:515px;width:87px"><span class="sx">Оптовая распрод</span></div><div class="cell" style="left:535px;top:515px;width:102px;text-align:right"><span class="sxr">2,0000</span></div><div class="cell" style="left:644px;top:515px;width:60px"><span class="sx">шт.</span></div><div class="cell" style="left:732px;top:515px;width:103px;text-align:right"><span class="sxr">205572,00</span></div>
<div class="cell" style="left:72px;top:533px;width:35px;text-align:right"><span class="sxr">4</span></div><div class="cell" style="left:114px;top:533px;width:117px"><span class="sx">Mitsubishi Electric SEZ-KA</span></div><div class="cell" style="left:447px;top:533px;width:87px"><span class="sx">Оптовая распрод</span></div><div class="cell" style="left:535px;top:533px;width:102px;text-align:right"><span class="sxr">1,0000</span></div><div class="cell" style="left:644px;top:533px;width:60px"><span class="sx">шт.</span></div><div class="cell" style="left:732px;top:533px;width:103px;text-align:right"><span class="sxr">95616,00</span></div>
<div class="track" style="left:72px;top:623px;width:816px;height:16px"></div>
<div class="sb" style="left:72px;top:623px;width:16px;height:16px"><i class="abs" style="left:4px;top:3px;border:4px solid transparent;border-right:4px solid #000;border-left:none"></i></div>
<div class="sb" style="left:88px;top:623px;width:16px;height:16px"></div>
<div class="sb" style="left:872px;top:623px;width:16px;height:16px"><i class="abs" style="left:6px;top:3px;border:4px solid transparent;border-left:4px solid #000;border-right:none"></i></div>

<!-- DIALOG BUTTONS -->
<div class="btn" style="left:74px;top:646px;width:89px;height:23px;line-height:20px"><span class="sxc">Обработки</span></div>
<div class="btn" style="left:168px;top:646px;width:21px;height:23px"></div>
<div class="abs" style="left:734px;top:646px;width:75px;height:23px;background:#000"></div>
<div class="btn" style="left:735px;top:647px;width:73px;height:21px;line-height:18px;text-align:left;padding-left:27px"><span class="sx">OK</span></div>
<div class="btn" style="left:813px;top:646px;width:75px;height:23px;line-height:20px;text-align:left;padding-left:27px"><span class="sx">Отмена</span></div>
<svg class="abs" style="left:737px;top:650px" width="15" height="14"><use href="#iOk"/></svg><svg class="abs" style="left:817px;top:650px" width="14" height="14"><use href="#iCancel"/></svg><svg class="abs" style="left:171px;top:649px" width="14" height="16" viewBox="0 0 14 16"><path d="M2 0v15.500M12 0v15.500" stroke="#b07a48" stroke-width="1.800"/><path d="M3 3h8" stroke="#e0705a" stroke-width="2"/><path d="M3 8h8" stroke="#52b060" stroke-width="2.200"/><path d="M3 12.500h8" stroke="#5a8ad8" stroke-width="2.200"/></svg>



<!-- MDI TABS -->
<div id="mditabs" class="abs">
  <div id="mdiact" class="abs"></div><svg class="abs" style="left:7px;top:6px" width="16" height="16"><use href="#iBag"/></svg><svg class="abs" style="left:247px;top:6px" width="16" height="15"><use href="#iTruck"/></svg>
  <div class="t" style="left:25px">Входящая оплата</div>
  <div class="t" style="left:265px">Отгрузки - [изменение]</div>
  <i class="abs" style="left:238px;top:4px;width:2px;height:19px;border-left:1px solid #808080;border-right:1px solid #fff"></i>
  <i class="abs" style="left:478px;top:4px;width:2px;height:19px;border-left:1px solid #808080;border-right:1px solid #fff"></i>
</div>
<!-- STATUS -->
<div id="status" class="abs">
  <div class="sunk" style="left:8px;top:7px;width:663px;height:15px"></div>
  <div class="sunk" style="left:678px;top:7px;width:180px;height:15px"></div>
  <div class="sunk" style="left:866px;top:7px;width:150px;height:15px"></div>
</div>
<!-- TASKBAR -->
<div id="taskbar" class="abs">
<div class="btn" style="left:2px;top:2px;width:51px;height:21px;font-weight:bold;font-size:11.5px;line-height:19px;text-align:left;padding-left:19px"><span class="sx">Пуск</span></div>
<div class="btn" style="left:96px;top:2px;width:32px;height:21px"></div>
<div class="btn" style="left:402px;top:2px;width:32px;height:21px"></div>
<div class="abs" style="left:436px;top:2px;width:32px;height:21px;background:#fff;border:1px solid;border-color:#404040 #fff #fff #404040;box-shadow:inset 1px 1px 0 #808080"></div>
<div class="btn" style="left:470px;top:2px;width:32px;height:21px"></div>
<i class="abs" style="left:784px;top:3px;width:2px;height:20px;border-left:1px solid #808080;border-right:1px solid #fff"></i>
<div class="t" style="left:764px;top:5px;font-size:12px">RU</div>
<div class="sunk" style="left:787px;top:2px;width:237px;height:22px;border-right:none"></div>
<div class="t" style="left:970px;top:5px;font-size:11px">11:21</div>
<svg class="abs" style="left:4px;top:5px" width="16" height="14"><use href="#tFlag"/></svg><svg class="abs" style="left:70px;top:5px" width="16" height="16"><use href="#tWmp"/></svg><svg class="abs" style="left:104px;top:7px" width="16" height="14"><use href="#tFolder"/></svg><svg class="abs" style="left:138px;top:5px" width="16" height="16"><use href="#tBook"/></svg><svg class="abs" style="left:172px;top:5px" width="16" height="16"><use href="#tPn"/></svg><svg class="abs" style="left:206px;top:6px" width="17" height="12"><use href="#t7z"/></svg><svg class="abs" style="left:240px;top:5px" width="16" height="16"><use href="#tBird"/></svg><svg class="abs" style="left:274px;top:5px" width="16" height="16"><use href="#tBird"/></svg><svg class="abs" style="left:308px;top:6px" width="16" height="14"><use href="#tTri"/></svg><svg class="abs" style="left:342px;top:5px" width="16" height="16"><use href="#tChrome"/></svg><svg class="abs" style="left:376px;top:5px" width="16" height="16"><use href="#tFox"/></svg><svg class="abs" style="left:410px;top:5px" width="16" height="16"><use href="#tViber"/></svg><svg class="abs" style="left:442px;top:5px" width="20" height="16"><use href="#tCrm"/></svg><svg class="abs" style="left:478px;top:3px" width="18" height="18"><use href="#tPaint"/></svg><svg class="abs" style="left:794px;top:5px" width="17" height="17"><use href="#tNet"/></svg><svg class="abs" style="left:817px;top:5px" width="20" height="16"><use href="#tCrm"/></svg><svg class="abs" style="left:843px;top:5px" width="15" height="16"><use href="#tViber"/></svg><svg class="abs" style="left:866px;top:4px" width="17" height="17"><use href="#tUsb"/></svg><svg class="abs" style="left:891px;top:5px" width="16" height="16"><use href="#tJava"/></svg><svg class="abs" style="left:914px;top:5px" width="16" height="16"><use href="#tSpk"/></svg><svg class="abs" style="left:940px;top:5px" width="16" height="16"><use href="#tTri2"/></svg><svg class="abs" style="left:1004px;top:5px" width="16" height="16"><use href="#tMon"/></svg>

</div>
</div>
</body>
</html>
